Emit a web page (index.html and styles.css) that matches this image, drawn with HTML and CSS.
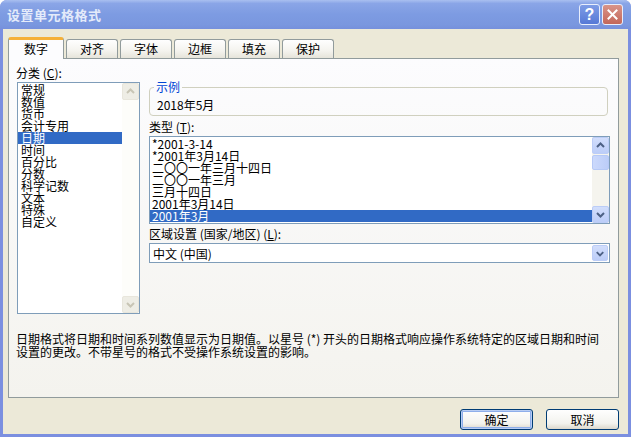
FILE: index.html
```html
<!DOCTYPE html>
<html lang="zh-CN">
<head>
    <meta charset="UTF-8">
    <title>设置单元格格式</title>
    <link rel="stylesheet" href="styles.css">
</head>
<body>
    <div class="window">
        <div class="titlebar">
            <span class="title">设置单元格格式</span>
            <div class="caption-buttons">
                <span class="cap-btn help">?</span>
                <span class="cap-btn close">
                    <svg width="11" height="11" viewBox="0 0 11 11"><path d="M1.5 1.5 L9.5 9.5 M9.5 1.5 L1.5 9.5" stroke="#fff" stroke-width="2" stroke-linecap="square"/></svg>
                </span>
            </div>
        </div>
        <div class="client">
            <ul class="tabs">
                <li class="tab active">数字</li>
                <li class="tab">对齐</li>
                <li class="tab">字体</li>
                <li class="tab">边框</li>
                <li class="tab">填充</li>
                <li class="tab">保护</li>
            </ul>
            <div class="panel">
                <div class="panel-top">
                    <div class="category">
                        <div class="label">分类 (<u>C</u>):</div>
                        <div class="listbox category-list">
                            <ul class="items">
                                <li>常规</li>
                                <li>数值</li>
                                <li>货币</li>
                                <li>会计专用</li>
                                <li class="selected">日期</li>
                                <li>时间</li>
                                <li>百分比</li>
                                <li>分数</li>
                                <li>科学记数</li>
                                <li>文本</li>
                                <li>特殊</li>
                                <li>自定义</li>
                            </ul>
                            <div class="scrollbar disabled">
                                <span class="sb-btn"><svg width="15" height="15" viewBox="0 0 15 15"><polyline points="4,9 7.5,5.5 11,9" fill="none" stroke="#c8c5b5" stroke-width="2"/></svg></span>
                                <span class="sb-track"></span>
                                <span class="sb-btn"><svg width="15" height="15" viewBox="0 0 15 15"><polyline points="4,6 7.5,9.5 11,6" fill="none" stroke="#c8c5b5" stroke-width="2"/></svg></span>
                            </div>
                        </div>
                    </div>
                    <div class="details">
                        <fieldset class="sample">
                            <legend>示例</legend>
                            <div class="sample-value">2018年5月</div>
                        </fieldset>
                        <div class="label">类型 (<u>T</u>):</div>
                        <div class="listbox type-list">
                            <ul class="items">
                                <li>*2001-3-14</li>
                                <li>*2001年3月14日</li>
                                <li>二〇〇一年三月十四日</li>
                                <li>二〇〇一年三月</li>
                                <li>三月十四日</li>
                                <li>2001年3月14日</li>
                                <li class="selected">2001年3月</li>
                            </ul>
                            <div class="scrollbar">
                                <span class="sb-btn"><svg width="15" height="15" viewBox="0 0 15 15"><polyline points="4,9 7.5,5.5 11,9" fill="none" stroke="#4d6185" stroke-width="2"/></svg></span>
                                <span class="sb-track"><span class="sb-thumb"></span></span>
                                <span class="sb-btn"><svg width="15" height="15" viewBox="0 0 15 15"><polyline points="4,6 7.5,9.5 11,6" fill="none" stroke="#4d6185" stroke-width="2"/></svg></span>
                            </div>
                        </div>
                        <div class="label locale-label">区域设置 (国家/地区) (<u>L</u>):</div>
                        <div class="combo">
                            <span class="combo-text">中文 (中国)</span>
                            <span class="sb-btn drop"><svg width="15" height="15" viewBox="0 0 15 15"><polyline points="4,6 7.5,9.5 11,6" fill="none" stroke="#4d6185" stroke-width="2"/></svg></span>
                        </div>
                    </div>
                </div>
                <p class="desc">日期格式将日期和时间系列数值显示为日期值。以星号 (*) 开头的日期格式响应操作系统特定的区域日期和时间设置的更改。不带星号的格式不受操作系统设置的影响。</p>
            </div>
            <div class="actions">
                <button class="btn default">确定</button>
                <button class="btn">取消</button>
            </div>
        </div>
    </div>
</body>
</html>
```

FILE: styles.css
```css
* {
    box-sizing: border-box;
}
body {
    margin: 0;
    background-color: #fff;
    font-family: "Noto Sans CJK SC", "Noto Sans", sans-serif;
    font-size: 12px;
    color: #000;
}
ul {
    list-style: none;
    margin: 0;
    padding: 0;
}
u {
    text-decoration: underline;
}

/* janela */
.window {
    width: 631px;
    height: 437px;
    display: flex;
    flex-direction: column;
    background-color: #7b8fe0;
    border-radius: 7px 7px 0 0;
}
.titlebar {
    height: 29px;
    display: flex;
    align-items: center;
    justify-content: space-between;
    padding: 0 8px 0 7px;
    border-radius: 7px 7px 0 0;
    background: linear-gradient(to bottom, #a9bff0 0%, #8aa5e7 12%, #7d9be2 50%, #7a97df 85%, #7690dc 100%);
}
.title {
    color: #e4ebfa;
    font-weight: bold;
    font-size: 13px;
    letter-spacing: 0.5px;
}
.caption-buttons {
    display: flex;
    gap: 2px;
}
.cap-btn {
    width: 21px;
    height: 21px;
    border: 1px solid #e8eefc;
    border-radius: 3px;
    display: flex;
    align-items: center;
    justify-content: center;
    color: #fff;
    font-family: "Liberation Sans", sans-serif;
    font-weight: bold;
    font-size: 16px;
}
.help {
    background: linear-gradient(to bottom, #7e9ce6, #5679d6);
}
.close {
    background: linear-gradient(to bottom, #d99489, #c3675a);
}

.client {
    flex: 1;
    margin: 0 3px 3px;
    padding: 8px 9px 0 5px;
    background-color: #ece9d8;
}

/* abas */
.tabs {
    display: flex;
    align-items: flex-end;
    height: 22px;
    margin-bottom: -1px;
    position: relative;
    z-index: 1;
}
.tab {
    width: 52px;
    height: 19px;
    margin: 0 2px 1px 0;
    border: 1px solid #919b9c;
    border-bottom: none;
    border-radius: 3px 3px 0 0;
    background: linear-gradient(to bottom, #fefefe, #f4f3ee 60%, #e6e4da);
    text-align: center;
    line-height: 18px;
}
.tab.active {
    width: 56px;
    height: 22px;
    margin-bottom: 0;
    border-top: 3px solid #f5b038;
    background: #fcfcfe;
    line-height: 18px;
}

.panel {
    height: 340px;
    padding: 7px 8px 0 8px;
    border: 1px solid #919b9c;
    background: linear-gradient(to bottom, #fcfcfe, #f4f3ee);
}
.panel-top {
    display: flex;
}
.label {
    height: 13px;
    line-height: 13px;
    margin-bottom: 3px;
}
.category {
    width: 123px;
}
.category .label {
    margin-left: -1px;
}

/* listas */
.listbox {
    display: flex;
    background-color: #fff;
    border: 1px solid #7f9db9;
}
.listbox .items {
    flex: 1;
    line-height: 12px;
}
.listbox li {
    height: 12px;
    white-space: nowrap;
}
.listbox li.selected {
    background-color: #316ac5;
    color: #fff;
}
.category-list {
    height: 232px;
}
.category-list .items {
    padding-top: 1px;
}
.category-list li {
    padding-left: 3px;
}
.type-list {
    height: 88px;
}
.type-list .items {
    padding-top: 1px;
}
.type-list li {
    padding-left: 2px;
}

.scrollbar {
    width: 17px;
    display: flex;
    flex-direction: column;
    background-color: #f5f4ee;
}
.scrollbar.disabled {
    background-color: #fdfdfa;
}
.sb-btn {
    width: 17px;
    height: 17px;
    display: flex;
    align-items: center;
    justify-content: center;
    border: 1px solid #bccdf7;
    border-radius: 2px;
    background: linear-gradient(to bottom, #d2defc, #bccdf8);
}
.disabled .sb-btn {
    border-color: #e8e6dc;
    background: #eeede5;
}
.sb-track {
    flex: 1;
    padding-top: 1px;
}
.sb-thumb {
    display: block;
    width: 17px;
    height: 15px;
    border: 1px solid #b6c9f6;
    border-radius: 2px;
    background: linear-gradient(to right, #cbd9fc, #bccdf8);
}

.details {
    flex: 1;
    margin: 15px 0 0 9px;
}
.sample {
    margin: 0 2px 4px 0;
    padding: 0 0 3px 4px;
    border: 1px solid #d0d0bf;
    border-radius: 4px;
}
.sample legend {
    padding: 0 2px;
    line-height: 12px;
    color: #0046d5;
}
.sample-value {
    margin: 5px 0 0 3px;
    line-height: 14px;
}
.locale-label {
    margin-top: 3px;
}
.combo {
    height: 20px;
    display: flex;
    align-items: center;
    justify-content: space-between;
    padding: 0 1px 0 3px;
    background-color: #fff;
    border: 1px solid #7f9db9;
}
.drop {
    width: 16px;
    height: 16px;
}

.desc {
    margin: 18px 0 0 -1px;
    line-height: 13px;
}

/* botões */
.actions {
    display: flex;
    justify-content: flex-end;
    gap: 13px;
    margin-top: 11px;
}
.btn {
    width: 73px;
    height: 21px;
    padding: 0;
    font-family: inherit;
    font-size: 12px;
    color: #000;
    border: 1px solid #003c74;
    border-radius: 3px;
    background: linear-gradient(to bottom, #fefefe, #f3f3ee 70%, #dcd8cc);
}
.btn.default {
    box-shadow: inset 0 0 0 1px #b8cdf3, inset 0 0 0 2px #8eaeea;
}
```
